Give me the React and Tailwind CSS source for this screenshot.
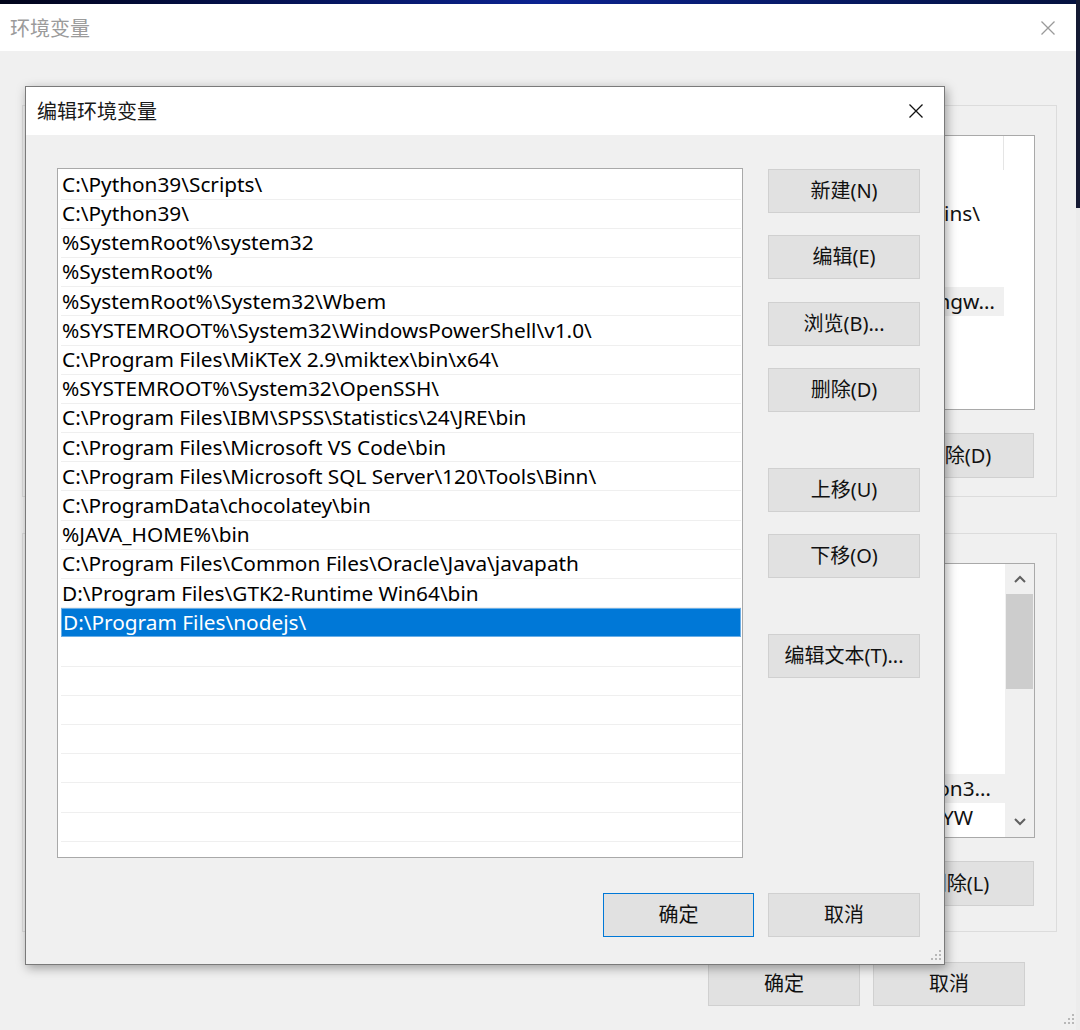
import React from "react";

const paths = [
  "C:\\Python39\\Scripts\\",
  "C:\\Python39\\",
  "%SystemRoot%\\system32",
  "%SystemRoot%",
  "%SystemRoot%\\System32\\Wbem",
  "%SYSTEMROOT%\\System32\\WindowsPowerShell\\v1.0\\",
  "C:\\Program Files\\MiKTeX 2.9\\miktex\\bin\\x64\\",
  "%SYSTEMROOT%\\System32\\OpenSSH\\",
  "C:\\Program Files\\IBM\\SPSS\\Statistics\\24\\JRE\\bin",
  "C:\\Program Files\\Microsoft VS Code\\bin",
  "C:\\Program Files\\Microsoft SQL Server\\120\\Tools\\Binn\\",
  "C:\\ProgramData\\chocolatey\\bin",
  "%JAVA_HOME%\\bin",
  "C:\\Program Files\\Common Files\\Oracle\\Java\\javapath",
  "D:\\Program Files\\GTK2-Runtime Win64\\bin",
  "D:\\Program Files\\nodejs\\",
];

function CloseX({ color = "#111", size = 16 }) {
  return (
    <svg width={size} height={size} viewBox="0 0 16 16" fill="none">
      <path d="M1.5 1.5L14.5 14.5M14.5 1.5L1.5 14.5" stroke={color} strokeWidth="1.3" />
    </svg>
  );
}

function Grip() {
  return (
    <svg width="12" height="12" viewBox="0 0 12 12">
      <rect x="9" y="1" width="2" height="2" fill="#b8b8b8" />
      <rect x="5" y="5" width="2" height="2" fill="#b8b8b8" />
      <rect x="9" y="5" width="2" height="2" fill="#b8b8b8" />
      <rect x="1" y="9" width="2" height="2" fill="#b8b8b8" />
      <rect x="5" y="9" width="2" height="2" fill="#b8b8b8" />
      <rect x="9" y="9" width="2" height="2" fill="#b8b8b8" />
    </svg>
  );
}

function Btn({ children, w = "w-[152px]", h = "h-[44px]", primary = false }) {
  return (
    <div
      className={`${w} ${h} flex items-center justify-center bg-[#e1e1e1] border ${
        primary ? "border-[#0078d7]" : "border-[#d0d0d0]"
      } text-[20px] text-[#111] shrink-0 whitespace-nowrap`}
    >
      {children}
    </div>
  );
}

function BgRow({ text, hl = false, pr = "pr-[24px]" }) {
  return (
    <div
      className={`h-[29.2px] flex items-center justify-end overflow-hidden whitespace-nowrap ${pr} ${
        hl ? "bg-[#f0f0f0]" : ""
      }`}
    >
      {text}
    </div>
  );
}

export default function App() {
  const emptyCount = 23 - paths.length;
  return (
    <div className="w-[1080px] h-[1030px] relative overflow-hidden bg-[#f0f0f0] flex font-['Noto_Sans','Noto_Sans_CJK_SC',sans-serif] text-[#111]">
      {/* background window */}
      <div className="w-[1076px] h-full flex flex-col relative">
        <div className="h-[4px] bg-gradient-to-r from-[#01041a] via-[#0b2290] to-[#04113f]" />
        <div className="h-[47px] bg-white flex items-center justify-between pl-[10px] pr-[20px]">
          <span className="text-[20px] text-[#9b9b9b] font-['Noto_Sans_CJK_SC',sans-serif]">环境变量</span>
          <CloseX color="#9a9a9a" size={16} />
        </div>
        <div className="flex-1 flex flex-col pl-[22px] pr-[19px] pt-[54px]">
          {/* user vars group */}
          <div className="h-[392px] border border-[#dcdcdc] flex flex-col pt-[29px] pr-[21px] pl-[20px]">
            <div className="h-[275px] bg-white border border-[#a9a9a9] flex flex-col text-[20.8px]">
              <div className="h-[34px] flex">
                <div className="flex-1" />
                <div className="w-[1px] h-full bg-[#e5e5e5]" />
                <div className="w-[30px]" />
              </div>
              <div className="flex flex-col pr-[30px]">
                <BgRow text="" />
                <BgRow text="ins\" pr="pr-[24px]" />
                <BgRow text="" />
                <BgRow text="" />
                <BgRow text="ngw…" hl pr="pr-[9px]" />
              </div>
            </div>
            <div className="flex justify-end mt-[23px] mr-[1px]">
              <Btn h="h-[45px]">删除(D)</Btn>
            </div>
          </div>
          {/* system vars group */}
          <div className="h-[399px] mt-[36px] border border-[#dcdcdc] flex flex-col pt-[29px] pr-[21px] pl-[20px]">
            <div className="h-[275px] bg-white border border-[#a9a9a9] flex text-[20.8px]">
              <div className="flex-1 flex flex-col pt-[210px]">
                <BgRow text="on3…" hl pr="pr-[14px]" />
                <BgRow text="YW" pr="pr-[32px]" />
              </div>
              <div className="w-[29px] bg-[#f0f0f0] flex flex-col">
                <div className="h-[30px] flex items-center justify-center">
                  <svg width="12" height="8" viewBox="0 0 12 8" fill="none">
                    <path d="M1 7L6 2L11 7" stroke="#606060" strokeWidth="2" />
                  </svg>
                </div>
                <div className="h-[95px] mx-[1px] bg-[#cdcdcd]" />
                <div className="flex-1" />
                <div className="h-[30px] flex items-center justify-center">
                  <svg width="12" height="8" viewBox="0 0 12 8" fill="none">
                    <path d="M1 1L6 6L11 1" stroke="#606060" strokeWidth="2" />
                  </svg>
                </div>
              </div>
            </div>
            <div className="flex justify-end mt-[23px] mr-[1px]">
              <Btn h="h-[45px]">删除(L)</Btn>
            </div>
          </div>
          <div className="flex justify-end gap-[13px] mt-[30px] mr-[32px]">
            <Btn>确定</Btn>
            <Btn>取消</Btn>
          </div>
        </div>
        <div className="absolute right-[1px] bottom-[5px]">
          <Grip />
        </div>
      </div>
      {/* strip of window behind */}
      <div className="w-[4px] h-full flex flex-col">
        <div className="h-[208px] bg-[#151a33]" />
        <div className="flex-1 bg-[#ececec]" />
      </div>

      {/* dialog */}
      <div className="absolute left-[25px] top-[86px] w-[920px] h-[879px] bg-[#f0f0f0] border border-[#7a7a7a] shadow-[2px_3px_10px_rgba(0,0,0,0.35)] flex flex-col">
        <div className="h-[48px] bg-white flex items-center justify-between pl-[11px] pr-[20px]">
          <span className="text-[20px] text-[#1a1a1a] font-['Noto_Sans_CJK_SC',sans-serif]">编辑环境变量</span>
          <CloseX color="#111" size={16} />
        </div>
        <div className="flex-1 flex flex-col pl-[31px] pr-[24px] pt-[33px] relative">
          <div className="flex gap-[25px]">
            <div className="w-[686px] h-[690px] bg-white border border-[#a9a9a9] pl-[3px] pr-[1px] pt-[1.4px] flex flex-col text-[20.8px] text-black overflow-hidden">
              {paths.map((p, i) => {
                const sel = i === paths.length - 1;
                return (
                  <div
                    key={i}
                    className={`h-[29.2px] shrink-0 flex items-center pl-[1px] whitespace-nowrap ${
                      sel
                        ? "bg-[#0078d7] text-white border border-[#6aaee6]"
                        : "border-b border-[#efefef]"
                    }`}
                  >
                    {p}
                  </div>
                );
              })}
              {Array.from({ length: emptyCount }).map((_, i) => (
                <div key={"e" + i} className="h-[29.2px] shrink-0 border-b border-[#efefef]" />
              ))}
            </div>
            <div className="flex flex-col pt-[1px]">
              <Btn>新建(N)</Btn>
              <div className="h-[22px]" />
              <Btn>编辑(E)</Btn>
              <div className="h-[23px]" />
              <Btn>浏览(B)...</Btn>
              <div className="h-[22px]" />
              <Btn>删除(D)</Btn>
              <div className="h-[56px]" />
              <Btn>上移(U)</Btn>
              <div className="h-[22px]" />
              <Btn>下移(O)</Btn>
              <div className="h-[56px]" />
              <Btn>编辑文本(T)...</Btn>
            </div>
          </div>
          <div className="flex justify-end gap-[14px] mt-[35px]">
            <Btn w="w-[151px]" primary>
              确定
            </Btn>
            <Btn>取消</Btn>
          </div>
          <div className="absolute right-[2px] bottom-[3px]">
            <Grip />
          </div>
        </div>
      </div>
    </div>
  );
}
